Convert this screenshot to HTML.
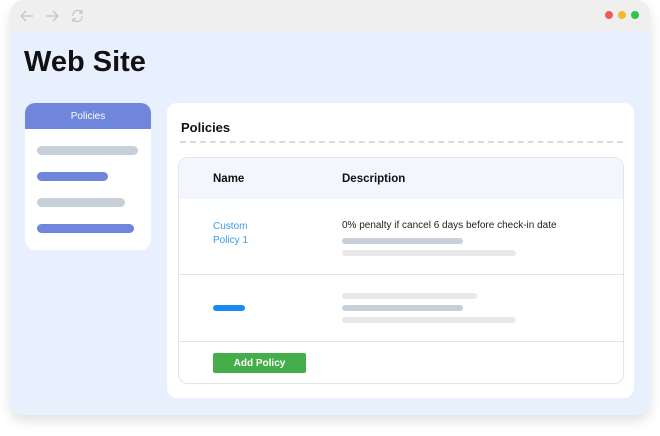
<!DOCTYPE html>
<html><head><style>
*{margin:0;padding:0;box-sizing:border-box}
body{width:660px;height:436px;background:#fff;font-family:"Liberation Sans",sans-serif;position:relative;overflow:hidden}
.win{position:absolute;left:10px;top:0;width:640px;height:415px;border-radius:14px;background:#e9f0fd;overflow:hidden;box-shadow:0 6px 12px rgba(0,0,0,.12)}
.bar{height:31px;background:#efefef}
.dot{position:absolute;top:11px;width:8px;height:8px;border-radius:50%}
.a{position:absolute}
.pill{position:absolute;height:9px;border-radius:5px}
</style></head><body>
<div class="win">
<div class="bar"></div>
<svg class="a" style="left:8px;top:8px" width="70" height="16" fill="none" stroke="#c4c4c4" stroke-width="1.3">
<path d="M3 8H15M3 8L8 3M3 8L8 13"/><path d="M28 8H40M40 8L35 3M40 8L35 13"/>
<path d="M64 4.5A5 5 0 0 0 55 8M55 11.5A5 5 0 0 0 64 8"/><path d="M64 2v3h-3M55 14v-3h3"/>
</svg>
<div class="dot" style="left:595px;background:#f25b5b"></div>
<div class="dot" style="left:608px;background:#f8b92b"></div>
<div class="dot" style="left:621px;background:#2cc44a"></div>
<div class="a" style="left:14px;top:46px;font-size:29px;font-weight:bold;color:#111">Web Site</div>
<div class="a" style="left:15px;top:103px;width:126px;height:147px;background:#fff;border-radius:10px;overflow:hidden">
<div style="height:26px;background:#6f86dc;color:#fff;font-size:10px;text-align:center;line-height:28px">Policies</div>
<div class="pill" style="left:12px;top:43px;width:101px;background:#c7d0d8"></div>
<div class="pill" style="left:12px;top:69px;width:71px;background:#6f86dc"></div>
<div class="pill" style="left:12px;top:95px;width:88px;background:#c7d0d8"></div>
<div class="pill" style="left:12px;top:121px;width:97px;background:#6f86dc"></div>
</div>
<div class="a" style="left:157px;top:103px;width:467px;height:295px;background:#fff;border-radius:10px">
<div class="a" style="left:14px;top:17px;font-size:13px;font-weight:bold;color:#111">Policies</div>
<div class="a" style="left:13px;top:38px;width:443px;border-top:2px dashed #d8dce2"></div>
<div class="a" style="left:11px;top:54px;width:446px;height:227px;border:1px solid #e2e6ec;border-radius:10px;overflow:hidden">
<div style="height:41px;background:#f3f7fd;font-size:11.5px;font-weight:bold;color:#111;position:relative">
<span class="a" style="left:34px;top:15px">Name</span><span class="a" style="left:163px;top:15px">Description</span></div>
<div class="a" style="left:34px;top:62px;font-size:10px;color:#3a9be8;line-height:14px">Custom<br>Policy 1</div>
<div class="a" style="left:163px;top:62px;font-size:10px;color:#222">0% penalty if cancel 6 days before check-in date</div>
<div class="pill" style="left:163px;top:80px;width:121px;height:6px;background:#c7d0d8"></div>
<div class="pill" style="left:163px;top:92px;width:174px;height:6px;background:#e8e8e8"></div>
<div class="a" style="left:0;top:116px;width:100%;border-top:1px solid #e2e6ec"></div>
<div class="pill" style="left:34px;top:147px;width:32px;height:6px;background:#1a8cf0"></div>
<div class="pill" style="left:163px;top:135px;width:135px;height:6px;background:#e8e8e8"></div>
<div class="pill" style="left:163px;top:147px;width:121px;height:6px;background:#c7d0d8"></div>
<div class="pill" style="left:163px;top:159px;width:174px;height:6px;background:#e8e8e8"></div>
<div class="a" style="left:0;top:183px;width:100%;border-top:1px solid #e2e6ec"></div>
<div class="a" style="left:34px;top:195px;width:93px;height:20px;background:#46ad4b;border-radius:2px;color:#fff;font-size:10px;font-weight:bold;text-align:center;line-height:21px">Add Policy</div>
</div>
</div>
</div>
</body></html>
